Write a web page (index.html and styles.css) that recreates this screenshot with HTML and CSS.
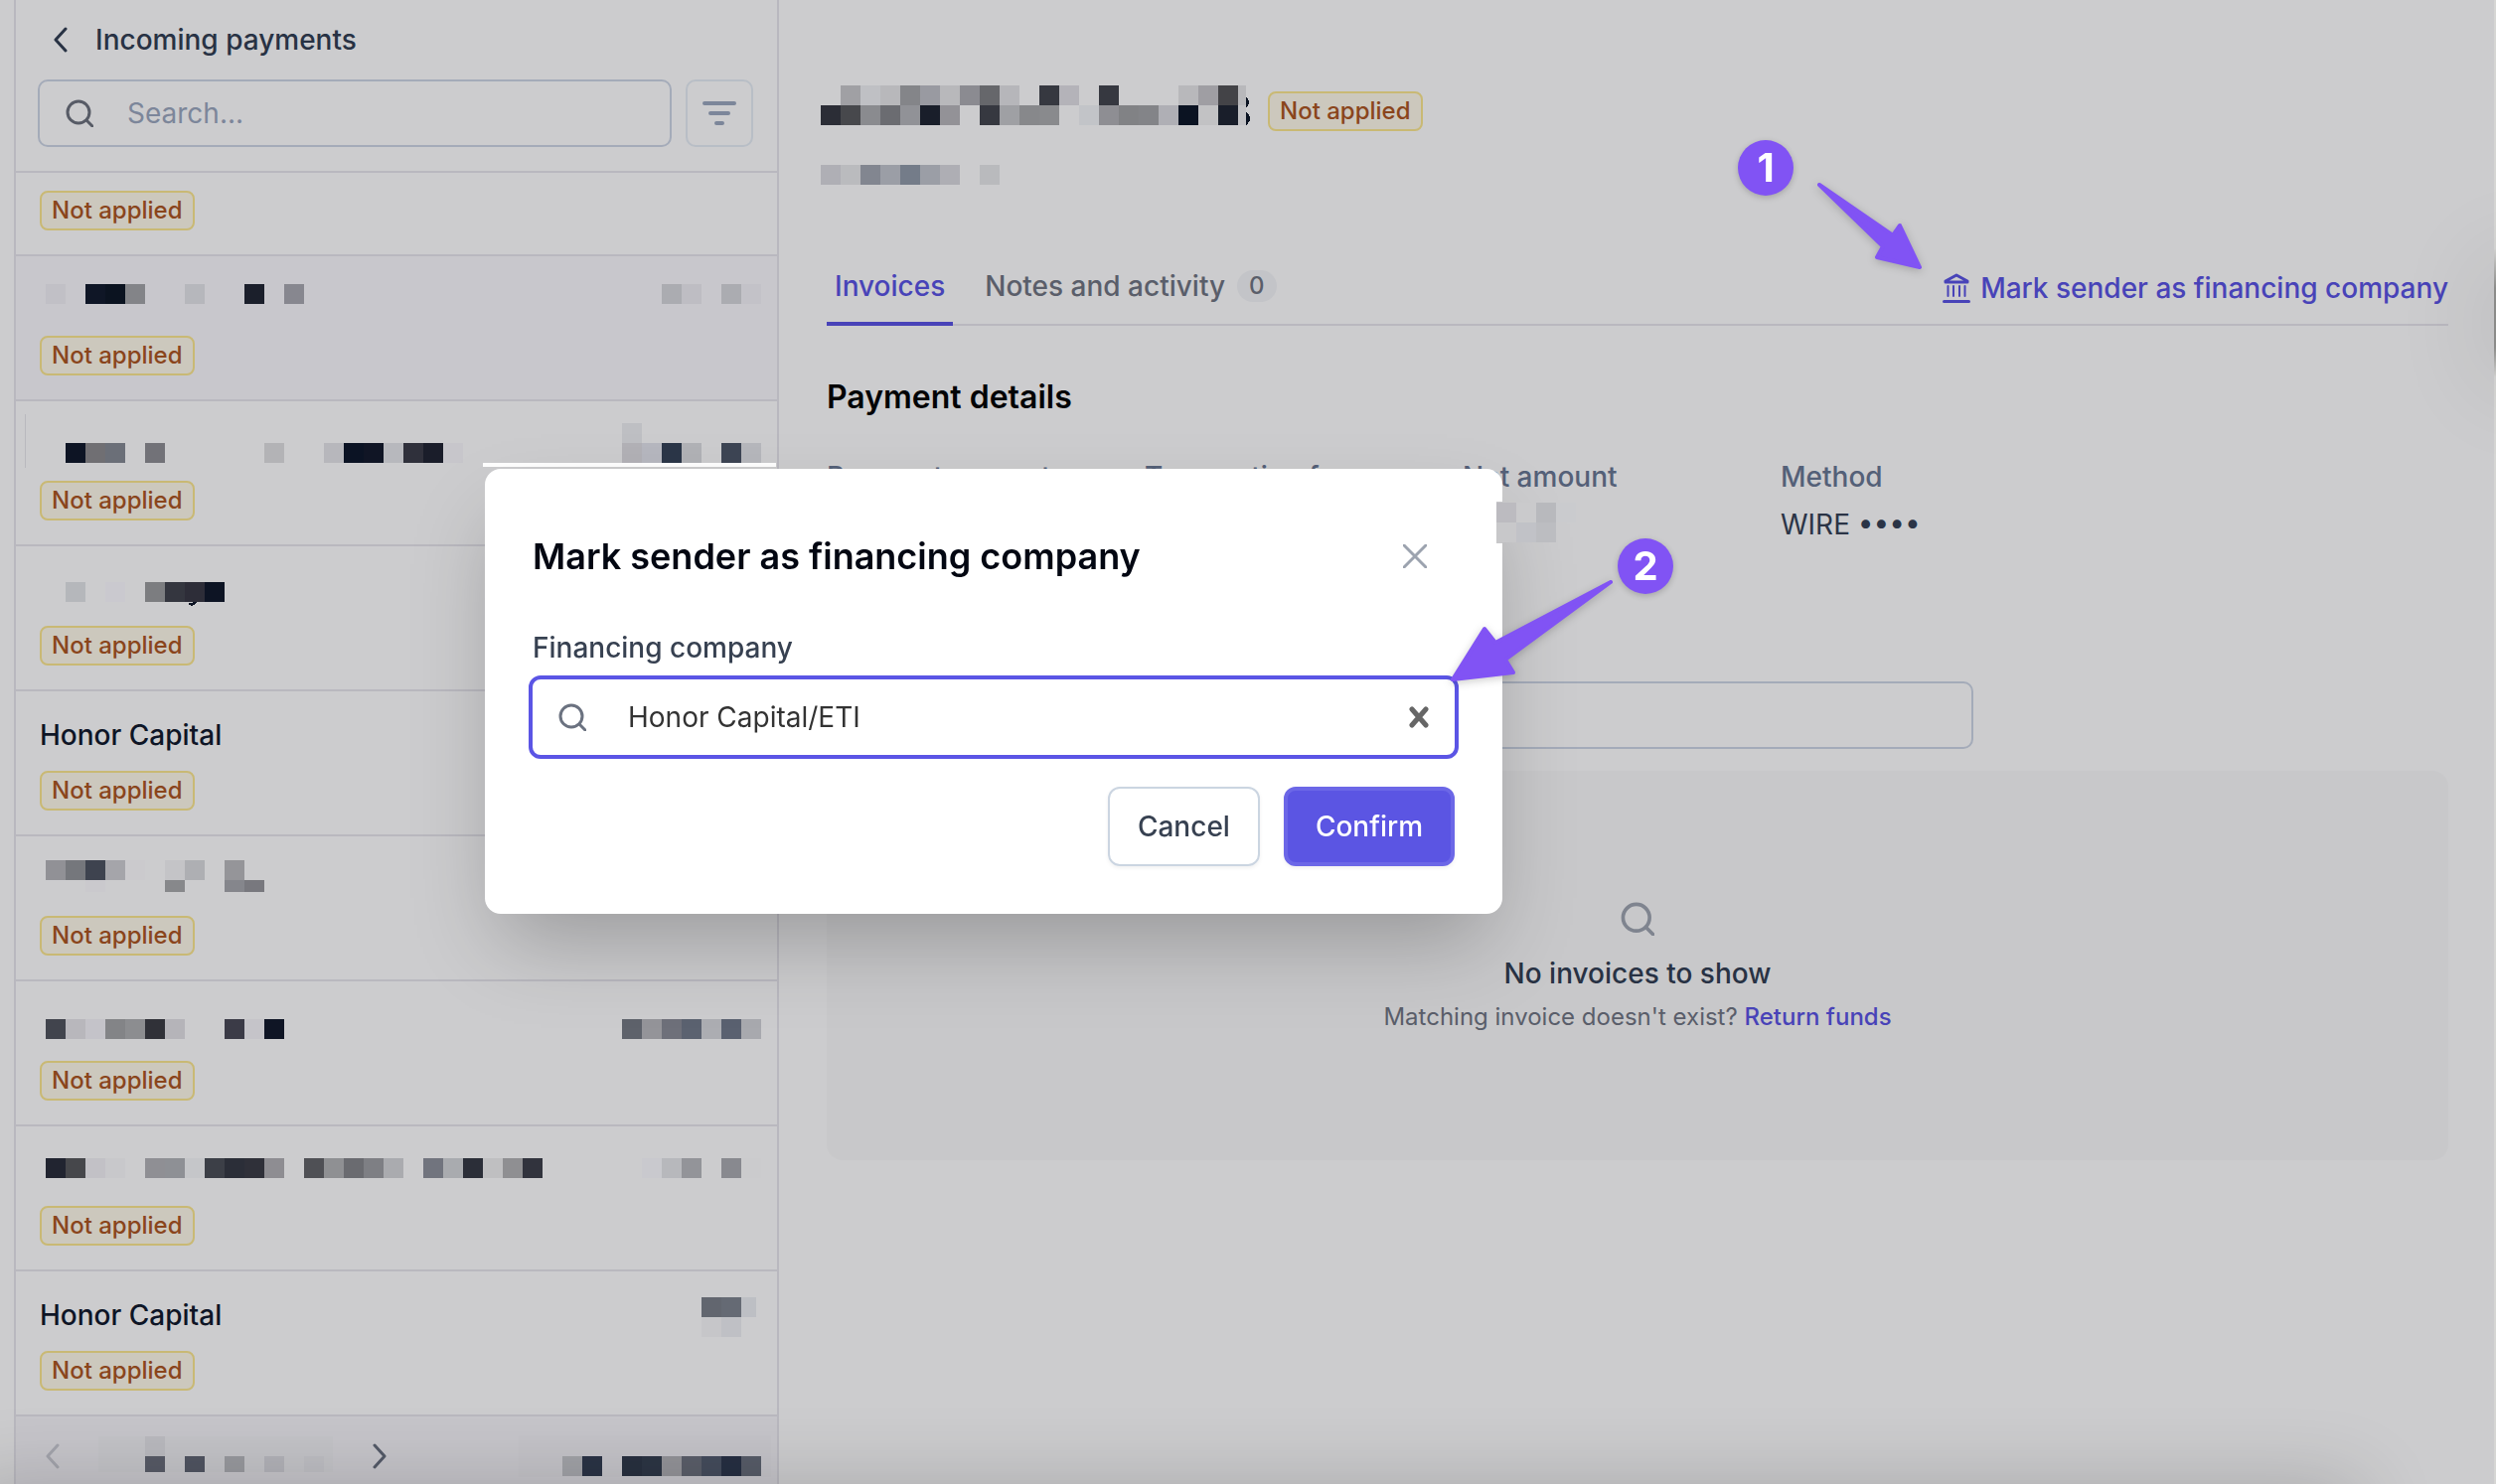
FILE: index.html
```
<!DOCTYPE html>
<html lang="en">

<head>
    <meta charset="UTF-8">
    <meta name="viewport" content="width=device-width, initial-scale=1.0">
    <title>Incoming payments</title>
    <link rel="stylesheet" href="styles.css">
</head>

<body>
    <div class="app">
        <aside class="sidebar">
            <header class="sidebar-header">
                <a class="back" href="#">
                    <svg class="chevron" viewBox="0 0 14 26"><path d="M12 2 2 13l10 11" /></svg>
                    Incoming payments
                </a>
                <div class="search-row">
                    <label class="search-box">
                        <svg class="search-icon" viewBox="0 0 28 28"><circle cx="13" cy="13" r="11" /><path d="m21 21 6 6" /></svg>
                        <input type="text" placeholder="Search..." aria-label="Search payments">
                    </label>
                    <button class="filter" aria-label="Filter">
                        <svg viewBox="0 0 34 24"><path d="M2 2h30M8 12h18M14 22h6" /></svg>
                    </button>
                </div>
            </header>

            <ul class="payments">
                <li class="payment payment-cut"><span class="tag">Not applied</span></li>

                <li class="payment payment-selected">
                    <div class="payment-title">
                        <svg class="mosaic"><g transform="translate(6 4)"><rect x="0" fill="#c1c0c6" /><rect x="40" fill="#0f1626" /><rect x="60" fill="#0b1320" /><rect x="80" fill="#838488" /><rect x="140" fill="#b6b7bc" /><rect x="200" fill="#1b1f2b" /><rect x="240" fill="#87878f" /></g></svg>
                        <svg class="mosaic mosaic-amount"><g transform="translate(0 4)"><rect x="40" fill="#abacb1" /><rect x="60" fill="#bebdc3" /><rect x="100" fill="#abacb1" /><rect x="120" fill="#c3c2c8" /></g></svg>
                    </div>
                    <span class="tag">Not applied</span>
                </li>

                <li class="payment payment-marked">
                    <div class="payment-title">
                        <svg class="mosaic"><g transform="translate(6 18)"><rect x="20" fill="#0d1424" /><rect x="40" fill="#706f73" /><rect x="60" fill="#6b6f78" /><rect x="100" fill="#727278" /><rect x="220" fill="#b3b3b6" /><rect x="280" fill="#b7b7bc" /><rect x="300" fill="#0b1324" /><rect x="320" fill="#101525" /><rect x="340" fill="#b7b8bd" /><rect x="360" fill="#2f303b" /><rect x="380" fill="#1a1d2a" /><rect x="400" fill="#c7c6cb" /></g></svg>
                        <svg class="mosaic mosaic-amount"><g transform="translate(0 18)"><rect x="0" y="-20" fill="#bebfc3" /><rect x="0" fill="#b2b1b6" /><rect x="20" fill="#b6b7bf" /><rect x="40" fill="#2b3648" /><rect x="60" fill="#b1b2b6" /><rect x="100" fill="#3d4554" /><rect x="120" fill="#b6b7bc" /></g></svg>
                    </div>
                    <span class="tag">Not applied</span>
                </li>

                <li class="payment">
                    <div class="payment-title">
                        <svg class="mosaic"><g transform="translate(6 12)"><rect x="20" fill="#b5b7bb" /><rect x="60" fill="#cac9cf" /><rect x="100" fill="#7c7d80" /><rect x="120" fill="#34363f" /><rect x="140" fill="#2d2d38" /><rect x="160" fill="#0d1424" /><path d="M144 21v2q6 2 8-3h-3q-2 2-5 1z" fill="#0d1424" /></g></svg>
                    </div>
                    <span class="tag">Not applied</span>
                </li>

                <li class="payment">
                    <div class="payment-title">Honor Capital</div>
                    <span class="tag">Not applied</span>
                </li>

                <li class="payment">
                    <div class="payment-title">
                        <svg class="mosaic"><g transform="translate(6 0)"><rect x="0" fill="#919196" /><rect x="20" fill="#75777c" /><rect x="40" fill="#3e434f" /><rect x="60" fill="#a5a5aa" /><rect x="80" fill="#cbcacd" /><rect x="120" fill="#c4c4c7" /><rect x="140" fill="#aeafb3" /><rect x="180" fill="#959599" /></g><g class="short" transform="translate(6 20)"><rect x="40" fill="#cac9cd" /><rect x="120" fill="#87888b" /><rect x="180" fill="#85868c" /><rect x="200" fill="#78787e" /></g></svg>
                    </div>
                    <span class="tag">Not applied</span>
                </li>

                <li class="payment">
                    <div class="payment-title">
                        <svg class="mosaic"><g transform="translate(6 14)"><rect x="0" fill="#41444d" /><rect x="20" fill="#b8b7bc" /><rect x="40" fill="#c4c3c9" /><rect x="60" fill="#838487" /><rect x="80" fill="#8c8d90" /><rect x="100" fill="#303138" /><rect x="120" fill="#b5b4b9" /><rect x="180" fill="#3b3b47" /><rect x="200" fill="#c5c4c9" /><rect x="220" fill="#0f1525" /></g></svg>
                        <svg class="mosaic mosaic-amount"><g transform="translate(0 14)"><rect x="0" fill="#5e626b" /><rect x="20" fill="#949499" /><rect x="40" fill="#6e707a" /><rect x="60" fill="#5b6270" /><rect x="80" fill="#acadb2" /><rect x="100" fill="#5a6170" /><rect x="120" fill="#a8a9ae" /></g></svg>
                    </div>
                    <span class="tag">Not applied</span>
                </li>

                <li class="payment">
                    <div class="payment-title">
                        <svg class="mosaic"><g transform="translate(6 8)"><rect x="0" fill="#212430" /><rect x="20" fill="#46474b" /><rect x="40" fill="#c2c1c6" /><rect x="60" fill="#c8c8cb" /><rect x="100" fill="#8f8f94" /><rect x="120" fill="#8e9095" /><rect x="140" fill="#c5c6c9" /><rect x="160" fill="#3c3f47" /><rect x="180" fill="#2b2e38" /><rect x="200" fill="#2f3039" /><rect x="220" fill="#8e8d92" /><rect x="260" fill="#4f5055" /><rect x="280" fill="#8f9093" /><rect x="300" fill="#6a6b70" /><rect x="320" fill="#7e7f84" /><rect x="340" fill="#aaabaf" /><rect x="380" fill="#71747e" /><rect x="400" fill="#a9abaf" /><rect x="420" fill="#2b2e38" /><rect x="440" fill="#bfbfc1" /><rect x="460" fill="#8f8f92" /><rect x="480" fill="#31333d" /></g></svg>
                        <svg class="mosaic mosaic-amount"><g transform="translate(0 8)"><rect x="20" fill="#c9c9ce" /><rect x="40" fill="#b7b8bc" /><rect x="60" fill="#939499" /><rect x="100" fill="#88898f" /><rect x="120" fill="#cbcbcd" /></g></svg>
                    </div>
                    <span class="tag">Not applied</span>
                </li>

                <li class="payment">
                    <div class="payment-title">
                        Honor Capital
                        <svg class="mosaic mosaic-amount"><g transform="translate(0 2)"><rect x="80" fill="#62666f" /><rect x="100" fill="#656a74" /><path d="M120 0h15v20h-15z" fill="#bdbfc4" /><rect x="80" y="20" fill="#c6c6c9" /><rect x="100" y="20" fill="#bfc0c5" /></g></svg>
                    </div>
                    <span class="tag">Not applied</span>
                </li>
            </ul>

            <footer class="pager">
                <button class="page-button" aria-label="Previous page" disabled>
                    <svg class="chevron" viewBox="0 0 14 26"><path d="M12 2 2 13l10 11" /></svg>
                </button>
                <svg class="mosaic mosaic-range"><path d="M0 0h236v36H0z" fill="#c3c3c7" /><g transform="translate(47 0)"><rect fill="#b9b9be" /></g><g class="range" transform="translate(47 20)"><rect x="0" fill="#575a66" /><rect x="40" fill="#505461" /><rect x="80" fill="#98999e" /><rect x="120" fill="#b2b2b8" /><rect x="160" fill="#bebec3" /></g></svg>
                <button class="page-button" aria-label="Next page">
                    <svg class="chevron" viewBox="0 0 14 26"><path d="m2 2 10 11L2 24" /></svg>
                </button>
                <svg class="mosaic mosaic-amount"><path d="M-104-1h254v42h-254z" fill="#c4c3c8" /><g transform="translate(0 20)"><rect x="-60" fill="#a1a2a7" /><rect x="-40" fill="#2a3345" /><rect x="0" fill="#28303f" /><rect x="20" fill="#2c3544" /><rect x="40" fill="#939398" /><rect x="60" fill="#5a5e69" /><rect x="80" fill="#444c5c" /><rect x="100" fill="#262f42" /><rect x="120" fill="#575c68" /></g></svg>
            </footer>
        </aside>

        <main class="content">
            <div class="heading">
                <svg class="mosaic mosaic-name"><g transform="translate(-6 -6)"><rect x="20" fill="#a0a0a4" /><rect x="40" fill="#bfc0c4" /><rect x="60" fill="#b8b8bb" /><rect x="80" fill="#848589" /><rect x="100" fill="#999aa1" /><rect x="120" fill="#b8b8bb" /><rect x="140" fill="#8b8b91" /><rect x="160" fill="#66676b" /><rect x="180" fill="#b6b6ba" /><rect x="220" fill="#363840" /><rect x="240" fill="#b4b3b9" /><rect x="280" fill="#363840" /><rect x="360" fill="#b8b8bb" /><rect x="380" fill="#9f9ea3" /><rect x="400" fill="#434347" /><path d="M420 0h8v20h-8z" fill="#b8b8bb" /></g><g transform="translate(-6 14)"><rect x="0" fill="#2b2d36" /><rect x="20" fill="#47484c" /><rect x="40" fill="#8a8b8f" /><rect x="60" fill="#6b6c71" /><rect x="80" fill="#919297" /><rect x="100" fill="#191e2a" /><rect x="120" fill="#939297" /><rect x="160" fill="#363840" /><rect x="180" fill="#9fa0a4" /><rect x="200" fill="#87888b" /><rect x="220" fill="#898a8d" /><rect x="260" fill="#c2c4c8" /><rect x="280" fill="#8e8e93" /><rect x="300" fill="#818285" /><rect x="320" fill="#838488" /><rect x="340" fill="#afafb5" /><rect x="360" fill="#0b1322" /><rect x="380" fill="#c2c2c4" /><rect x="400" fill="#191e2a" /><path d="M420 0h8v20h-8z" fill="#c2c2c5" /><path d="M428-9q3 3 3 6t-3 6zM428 7q4 2 4 6t-4 7z" fill="#0b1322" /></g></svg>
                <span class="tag">Not applied</span>
            </div>
            <svg class="mosaic mosaic-sub"><g transform="translate(-6 0)"><rect x="0" fill="#afafb5" /><rect x="20" fill="#babbbe" /><rect x="40" fill="#828690" /><rect x="60" fill="#9b9ea6" /><rect x="80" fill="#747c89" /><rect x="100" fill="#9b9ea6" /><rect x="120" fill="#aeaeb4" /><rect x="160" fill="#b9babd" /></g></svg>

            <nav class="tabs">
                <a class="tab tab-active" href="#">Invoices</a>
                <a class="tab" href="#">Notes and activity <span class="count">0</span></a>
                <a class="mark-link" href="#">
                    <svg viewBox="0 0 28 30"><path d="M3 9v-1l11-6 11 6v1zM1.500 28.500h25" /><path class="columns" d="M5.500 13v10M11 13v10M17 13v10M22.500 13v10" /></svg>
                    Mark sender as financing company
                </a>
            </nav>

            <h2 class="section-title">Payment details</h2>
            <dl class="details">
                <div><dt>Payment amount</dt></div>
                <div><dt>Transaction fee</dt></div>
                <div><dt>Net amount</dt></div>
                <div><dt>Method</dt><dd>WIRE ••••</dd></div>
            </dl>

            <input class="invoice-search" type="text" aria-label="Search invoices">

            <section class="empty">
                <svg class="search-icon" viewBox="0 0 28 28"><circle cx="13" cy="13" r="11" /><path d="m21 21 6 6" /></svg>
                <h3>No invoices to show</h3>
                <p>Matching invoice doesn't exist? <a href="#">Return funds</a></p>
            </section>
        </main>
    </div>

    <div class="edge-right"></div>
    <div class="glow-bottom"></div>
    <div class="glow-right"></div>
    <div class="strip"></div>

    <div class="modal" role="dialog" aria-labelledby="modalTitle">
        <div class="modal-header">
            <h2 id="modalTitle">Mark sender as financing company</h2>
            <button class="close" aria-label="Close">
                <svg viewBox="0 0 24 24"><path d="m1 1 22 22M23 1 1 23" /></svg>
            </button>
        </div>
        <label class="field-label" for="company">Financing company</label>
        <div class="field">
            <svg class="search-icon" viewBox="0 0 28 28"><circle cx="13" cy="13" r="11" /><path d="m21 21 6 6" /></svg>
            <input id="company" type="text" value="Honor Capital/ETI">
            <button class="clear" aria-label="Clear">
                <svg viewBox="0 0 20 22"><path d="m3 3 14 16M17 3 3 19" /></svg>
            </button>
        </div>
        <div class="actions">
            <button class="button">Cancel</button>
            <button class="button button-primary">Confirm</button>
        </div>
    </div>

    <svg class="mosaic mosaic-net"><path d="M0-1h6v42H0z" fill="#c8c8ca" /><rect x="0" fill="#bcbbc0" /><rect x="20" fill="#cacacc" /><rect x="40" fill="#b8b9bd" /><rect x="60" fill="#cacbce" /><rect x="0" y="20" fill="#c8c8ca" /><rect x="20" y="20" fill="#c1c2c7" /><rect x="40" y="20" fill="#bcbdc1" /></svg>

    <!-- step markers -->
    <span class="step step-one">1</span>
    <span class="step step-two">2</span>
    <svg class="arrow arrow-one" viewBox="0 0 110 90"><path d="M3 3 77 54 84 44 104 86 61 76 67 65z" /></svg>
    <svg class="arrow arrow-two" viewBox="0 0 170 110"><path d="M163 4 47 65 36 51 4 102 65 95 57 82z" /></svg>
</body>

</html>
```
FILE: styles.css
```
* {
    box-sizing: border-box;
}

body {
    margin: 0;
    height: 100vh;
    overflow: hidden;
    background: #ccccce;
    color: #283244;
    font-family: Inter, "Liberation Sans", sans-serif;
    font-size: 28px;
    line-height: 40px;
}

h2,
h3,
p,
ul,
dl,
dd {
    margin: 0;
    padding: 0;
}

a {
    color: #4843b8;
    text-decoration: none;
}

button,
input {
    font: inherit;
    color: inherit;
    background: none;
    border: 0;
    padding: 0;
    outline: none;
}

svg {
    display: block;
    flex: none;
    fill: none;
    stroke-linecap: round;
    stroke-linejoin: round;
}

.app {
    display: flex;
    padding-left: 14px;
}

/* Sidebar */

.sidebar {
    width: 770px;
    flex: none;
    border: solid #b9b8bf;
    border-width: 0 2px;
}

.sidebar-header {
    padding: 20px 24px 24px 22px;
    border-bottom: 2px solid #b9b8bf;
}

.back {
    display: flex;
    align-items: center;
    gap: 28px;
    padding-left: 16px;
    color: #283244;
    font-weight: 500;
}

.chevron {
    width: 14px;
    height: 26px;
    stroke: currentColor;
    stroke-width: 3px;
}

.search-row {
    display: flex;
    gap: 14px;
    margin-top: 20px;
}

.search-box {
    display: flex;
    flex: 1;
    align-items: center;
    gap: 34px;
    height: 68px;
    padding: 0 26px;
    border: 2px solid #a4abb9;
    border-radius: 10px;
}

.search-box input {
    flex: 1;
    min-width: 0;
}

.search-box input::placeholder {
    color: #7c869a;
    opacity: 1;
}

.search-icon {
    width: 28px;
    height: 28px;
    stroke: #575b66;
    stroke-width: 3px;
}

.filter {
    display: flex;
    align-items: center;
    justify-content: center;
    width: 68px;
    height: 68px;
    border: 2px solid #b8bec6;
    border-radius: 10px;
}

.filter svg {
    width: 34px;
    height: 24px;
    stroke: #7c869a;
    stroke-width: 4px;
}

.payments {
    list-style: none;
}

.payment {
    position: relative;
    padding: 24px 16px 24px 24px;
    border-bottom: 2px solid #b9b8bf;
}

.payment-cut {
    padding-top: 18px;
}

.payment-selected {
    background: #c8c7cc;
}

.payment-marked::before {
    content: "";
    position: absolute;
    left: 9px;
    top: 13px;
    width: 1px;
    height: 54px;
    background: #b9b9be;
}

.payment-title {
    display: flex;
    justify-content: space-between;
    height: 40px;
    margin-bottom: 16px;
    color: #0e1526;
    font-weight: 500;
}

.tag {
    display: block;
    width: fit-content;
    padding: 0 10px;
    border: 2px solid #c9b974;
    border-radius: 8px;
    background: #ccc8bd;
    color: #8a451c;
    font-size: 24px;
    font-weight: 500;
    line-height: 36px;
}

.mosaic {
    overflow: visible;
    width: 506px;
    height: 40px;
    shape-rendering: crispEdges;
}

.mosaic rect {
    width: 20px;
    height: 20px;
}

.mosaic .short rect {
    height: 12px;
}

.mosaic .range rect {
    height: 16px;
}

.mosaic-amount {
    width: 140px;
}

.pager {
    display: flex;
    align-items: center;
    height: 80px;
    padding: 0 16px 0 30px;
    background: #c6c5ca;
    color: #545a68;
}

.page-button:disabled {
    color: #a3a4ac;
}

.mosaic-range {
    width: 234px;
    margin: 0 42px 0 39px;
}

.pager .mosaic-amount {
    margin-left: auto;
}

/* Payment */

.content {
    flex: 1;
    min-width: 0;
    padding: 92px 48px 0;
}

.heading {
    display: flex;
    gap: 20px;
}

.mosaic-name {
    width: 424px;
}

.mosaic-sub {
    width: 180px;
    height: 20px;
    margin-top: 34px;
}

.tabs {
    display: flex;
    gap: 24px;
    margin-top: 66px;
    border-bottom: 2px solid #b9b8bf;
    line-height: 32px;
    font-weight: 500;
}

.tab {
    display: flex;
    gap: 12px;
    margin-bottom: -2px;
    padding: 20px 8px;
    border-bottom: 4px solid transparent;
    color: #5a5e6a;
}

.tab-active {
    border-color: #4843b8;
    color: #4843b8;
}

.count {
    padding: 0 12px;
    border-radius: 16px;
    background: #c3c4c8;
    font-size: 24px;
}

.mark-link {
    display: flex;
    align-items: center;
    gap: 10px;
    margin-left: auto;
    padding-top: 2px;
}

.mark-link svg {
    width: 28px;
    height: 30px;
    stroke: currentColor;
    stroke-width: 3px;
}

.mark-link .columns {
    stroke-width: 2px;
}

.section-title {
    margin-top: 52px;
    color: #030406;
    font-size: 32px;
    font-weight: 600;
}

.details {
    display: grid;
    grid-template-columns: repeat(5, 320px);
    height: 88px;
    margin-top: 40px;
    color: #546078;
}

.details dt {
    font-weight: 500;
}

.details dd {
    margin-top: 8px;
    color: #2b3446;
}

.invoice-search {
    display: block;
    width: 1154px;
    height: 68px;
    margin-top: 138px;
    padding: 0 24px;
    border: 2px solid #a4abb9;
    border-radius: 10px;
}

.empty {
    display: flex;
    flex-direction: column;
    align-items: center;
    justify-content: center;
    min-height: 392px;
    margin-top: 22px;
    padding-top: 8px;
    border-radius: 16px;
    background: #c8c8ca;
}

.empty .search-icon {
    width: 34px;
    height: 34px;
    margin-bottom: 18px;
    stroke: #7f848f;
}

.empty h3 {
    font-size: 28px;
    font-weight: 500;
}

.empty p {
    margin-top: 4px;
    color: #5a5e6a;
    font-size: 24px;
}

.empty a {
    font-weight: 500;
}

/* Window edge shading */

.edge-right {
    position: fixed;
    top: 0;
    right: 0;
    width: 2px;
    height: 100%;
    background: linear-gradient(#d6d6d4 250px, #91918f 290px, #91918f 350px, #d6d6d4 380px);
}

.glow-bottom {
    position: fixed;
    top: 100%;
    left: -40px;
    right: 136px;
    height: 80px;
    box-shadow: 0 0 80px rgba(0, 0, 0, 0.18);
}

.glow-right {
    position: fixed;
    top: 270px;
    left: 100%;
    width: 60px;
    height: 110px;
    box-shadow: 0 0 100px 10px rgba(0, 0, 0, 0.09);
}

.strip {
    position: fixed;
    top: 466px;
    left: 486px;
    width: 295px;
    height: 4px;
    background: #fff;
}

/* Modal */

.modal {
    position: fixed;
    top: 472px;
    left: 488px;
    width: 1024px;
    padding: 64px 48px 48px;
    border-radius: 16px;
    background: #fff;
    box-shadow: 0 40px 80px -16px rgba(0, 0, 0, 0.25);
}

.modal-header {
    display: flex;
    align-items: center;
    justify-content: space-between;
    margin-bottom: 48px;
    padding-right: 28px;
    color: #030712;
    line-height: 48px;
}

.modal-header h2 {
    font-size: 36px;
    font-weight: 600;
}

.close svg {
    width: 24px;
    height: 24px;
    stroke: #9ca3af;
    stroke-width: 3px;
}

.field-label {
    display: block;
    color: #374151;
    font-weight: 500;
}

.field {
    display: flex;
    align-items: center;
    height: 76px;
    margin-top: 12px;
    padding: 0 26px;
    border-radius: 8px;
    outline: 4px solid #5b55e5;
}

.field .search-icon {
    stroke: #6b7280;
}

.field input {
    flex: 1;
    min-width: 0;
    padding: 0 42px;
    color: #333;
}

.clear svg {
    width: 20px;
    height: 22px;
    stroke: #666;
    stroke-width: 5px;
}

.actions {
    display: flex;
    justify-content: flex-end;
    gap: 24px;
    margin-top: 32px;
}

.button {
    height: 80px;
    padding: 0 28px;
    border: 2px solid #cbd5e1;
    border-radius: 12px;
    box-shadow: 0 2px 4px rgba(0, 0, 0, 0.06);
    color: #374151;
    font-weight: 500;
}

.button-primary {
    border: 4px solid #6c67e7;
    background: #5b55e3;
    color: #fff;
}

.mosaic-net {
    position: fixed;
    top: 506px;
    left: 1506px;
    width: 80px;
}

/* Step markers */

.step {
    position: fixed;
    width: 56px;
    height: 56px;
    border-radius: 50%;
    background: #8153f4;
    box-shadow: 0 2px 6px rgba(0, 0, 0, 0.2);
    color: #fff;
    font-size: 40px;
    font-weight: 700;
    line-height: 56px;
    text-align: center;
}

.step-one {
    top: 141px;
    left: 1749px;
}

.step-two {
    top: 542px;
    left: 1628px;
}

.arrow {
    position: fixed;
    overflow: visible;
    fill: #8153f4;
    stroke: #8153f4;
    stroke-width: 4px;
    filter: drop-shadow(0 2px 4px rgba(0, 0, 0, 0.2));
}

.arrow-one {
    top: 183px;
    left: 1828px;
    width: 110px;
    height: 90px;
}

.arrow-two {
    top: 582px;
    left: 1458px;
    width: 170px;
    height: 110px;
}
```
